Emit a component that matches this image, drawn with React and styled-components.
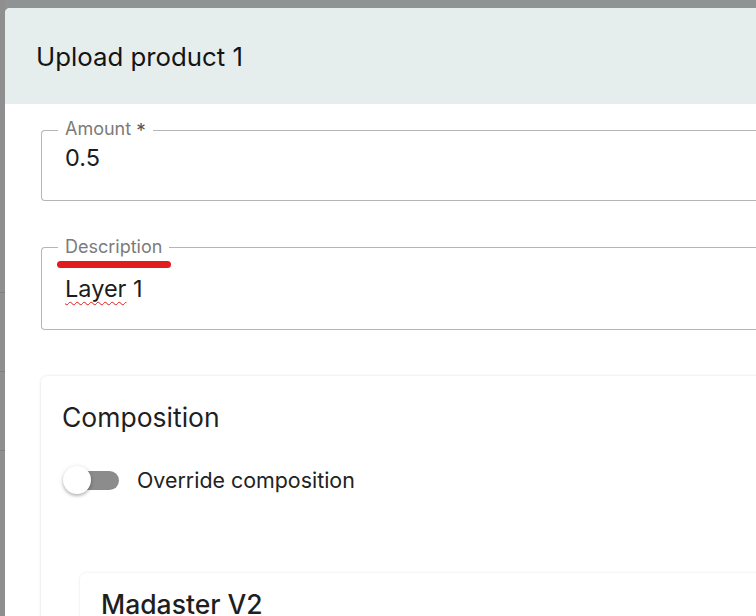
import React from 'react';
import styled, { createGlobalStyle } from 'styled-components';

const GlobalStyle = createGlobalStyle`
  html, body {
    margin: 0;
    padding: 0;
    background: #909393;
    font-family: Inter, "Noto Sans", sans-serif;
    overflow: hidden;
  }
`;

const Page = styled.div`
  width: 756px;
  height: 616px;
  display: grid;
  grid-template-columns: 5px 1fr;
  grid-template-rows: 8px 1fr;
  overflow: hidden;
`;

const Backdrop = styled.div`
  grid-column: 1;
  grid-row: 1 / 3;
  display: flex;
  flex-direction: column;
  background: #8f8f8f;
`;

const BackdropRow = styled.div`
  height: ${(p) => p.h}px;
  flex-shrink: 0;
  border-bottom: 1px solid #7f7f7f;
`;

const Dialog = styled.div`
  grid-column: 2;
  grid-row: 2;
  background: #ffffff;
  border-top-left-radius: 5px;
  overflow: hidden;
  display: flex;
  flex-direction: column;
`;

const Header = styled.div`
  height: 96px;
  flex-shrink: 0;
  display: flex;
  align-items: center;
  padding-left: 31px;
  background: #e6eeed;
`;

const Title = styled.h1`
  margin: 0;
  font-size: 25.8px;
  font-weight: 400;
  color: #141414;
`;

const Content = styled.div`
  padding: 15px 0 0 36px;
  display: flex;
  flex-direction: column;
  gap: 36px;
`;

const Field = styled.fieldset`
  margin: 0 -20px 0 0;
  padding: 0 20px 0 23px;
  border: 1px solid #b5b5b5;
  border-right: none;
  border-radius: 4px 0 0 4px;
  height: ${(p) => p.h}px;
  box-sizing: border-box;
  min-width: 0;
`;

const Legend = styled.legend`
  margin-left: -7px;
  padding: 0 7px;
  font-size: 18px;
  line-height: 20px;
  color: #7b7b7b;

  & > sup {
    font-size: 19px;
    vertical-align: -2px;
    margin-left: 5px;
    color: #555;
  }
`;

const Marker = styled.div`
  width: 114px;
  height: 7px;
  margin: 4px 0 0 -8px;
  border-radius: 4px;
  background: #e21c1c;
`;

const Value = styled.div`
  font-size: 23.5px;
  line-height: 28px;
  color: #1c1c1c;
  margin-top: ${(p) => p.top}px;
`;

const Misspelled = styled.span`
  text-decoration: underline wavy #e31b1b;
  text-decoration-thickness: 1px;
  text-underline-offset: 4px;
  text-decoration-skip-ink: none;
`;

const Card = styled.section`
  margin-top: 10px;
  margin-right: -20px;
  padding: 21px 0 0 21px;
  border-radius: 6px 0 0 0;
  background: #fff;
  box-shadow: 0 0 3px rgba(0, 0, 0, 0.12), 0 1px 2px rgba(0, 0, 0, 0.06);
  height: 260px;
`;

const CardTitle = styled.h2`
  margin: 0;
  font-size: 26.5px;
  line-height: 40px;
  font-weight: 400;
  color: #1f1f1f;
`;

const ToggleRow = styled.label`
  display: flex;
  align-items: center;
  gap: 18px;
  margin-top: 29px;
  font-size: 21.4px;
  color: #222;
`;

const Switch = styled.span`
  position: relative;
  width: 56px;
  height: 28px;
  display: flex;
  align-items: center;
  flex-shrink: 0;
  margin-left: 1px;
`;

const Track = styled.span`
  margin-left: 6px;
  width: 50px;
  height: 19px;
  border-radius: 10px;
  background: #8c8c8c;
`;

const Thumb = styled.span`
  position: absolute;
  left: 0;
  top: 0;
  width: 28px;
  height: 28px;
  border-radius: 50%;
  background: #fff;
  box-shadow: 0 2px 3px rgba(0, 0, 0, 0.2), 0 1px 5px rgba(0, 0, 0, 0.14);
`;

const InnerCard = styled.div`
  margin: 79px 0 0 18px;
  padding: 14px 0 0 21px;
  border-radius: 6px 0 0 0;
  box-shadow: 0 0 3px rgba(0, 0, 0, 0.1);
  height: 80px;
`;

const InnerTitle = styled.h3`
  margin: 0;
  font-size: 26.5px;
  line-height: 34px;
  font-weight: 500;
  color: #1f1f1f;
`;

export default function App() {
  return (
    <>
      <GlobalStyle />
      <Page>
        <Backdrop>
          <BackdropRow h={292} />
          <BackdropRow h={78} />
          <BackdropRow h={78} />
        </Backdrop>
        <Dialog>
          <Header>
            <Title>Upload product 1</Title>
          </Header>
          <Content>
            <Field h={82}>
              <Legend>
                Amount<sup>*</sup>
              </Legend>
              <Value top={3}>0.5</Value>
            </Field>
            <Field h={93}>
              <Legend>Description</Legend>
              <Marker />
              <Value top={7}>
                <Misspelled>Layer</Misspelled> 1
              </Value>
            </Field>
            <Card>
              <CardTitle>Composition</CardTitle>
              <ToggleRow>
                <Switch>
                  <Track />
                  <Thumb />
                </Switch>
                Override composition
              </ToggleRow>
              <InnerCard>
                <InnerTitle>Madaster V2</InnerTitle>
              </InnerCard>
            </Card>
          </Content>
        </Dialog>
      </Page>
    </>
  );
}
